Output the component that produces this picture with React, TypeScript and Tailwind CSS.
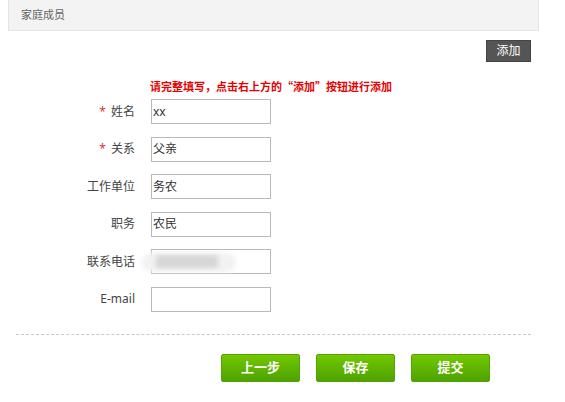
const font = { fontFamily: '"Microsoft YaHei", "Noto Sans", "Noto Sans CJK SC", sans-serif' }
const cjk = { fontFamily: '"Noto Sans CJK SC", sans-serif' }

const rows = [
  { label: '姓名', required: true, value: 'xx' },
  { label: '关系', required: true, value: '父亲' },
  { label: '工作单位', value: '务农' },
  { label: '职务', value: '农民' },
  { label: '联系电话', value: '', blurred: true },
  { label: 'E-mail', value: '' },
]

export default function App() {
  return (
    <div className="w-[565px] h-[402px] bg-white text-[#333] overflow-hidden" style={font}>
      <div className="px-2">
        <div className="h-[31px] w-[531px] bg-[#f3f3f3] border border-t-0 border-[#e4e4e4] flex items-center pl-3 text-[11px] text-[#666]">
          家庭成员
        </div>
      </div>

      <div className="flex justify-end pr-[34px] mt-[9px]">
        <button className="w-[45px] h-[22px] bg-[#555] text-white text-[12px] leading-none border border-[#444]">添加</button>
      </div>

      <div className="pl-[150px] mt-[16px] text-[11px] font-bold text-[#e60000] leading-[16px]" style={cjk}>
        请完整填写，点击右上方的“添加”按钮进行添加
      </div>

      <div className="flex flex-col gap-[12.5px] mt-[5px]">
        {rows.map((r) => (
          <div key={r.label} className="flex items-center h-[25px]">
            <div className="w-[135px] text-right text-[12px] text-[#444]">
              {r.required && <span className="text-[#d9363e] mr-[5px]">*</span>}
              {r.label}
            </div>
            <div className="relative ml-[16px] w-[120px] h-[25px] border border-[#b9b9b9] bg-white text-[12px] text-[#333] pl-[1px] flex items-center">
              {r.value}
              {r.blurred && (
                <div className="absolute -left-[10px] top-[3px] w-[94px] h-[19px] bg-[#f2f2f2] rounded-full blur-[2px]">
                  <div className="absolute left-[14px] top-[2px] w-[62px] h-[13px] bg-[#d6d6d6] blur-[1px]" />
                </div>
              )}
            </div>
          </div>
        ))}
      </div>

      <div className="ml-[16px] w-[515px] mt-[22px] border-t border-dashed border-[#c8c8c8]" />

      <div className="flex gap-[16px] pl-[221px] mt-[19px]">
        {['上一步', '保存', '提交'].map((t) => (
          <button
            key={t}
            className="w-[79px] h-[28px] rounded-[2px] bg-gradient-to-b from-[#72c800] to-[#4da200] border border-[#52a400] text-white text-[13px] font-bold"
          >
            {t}
          </button>
        ))}
      </div>
    </div>
  )
}
